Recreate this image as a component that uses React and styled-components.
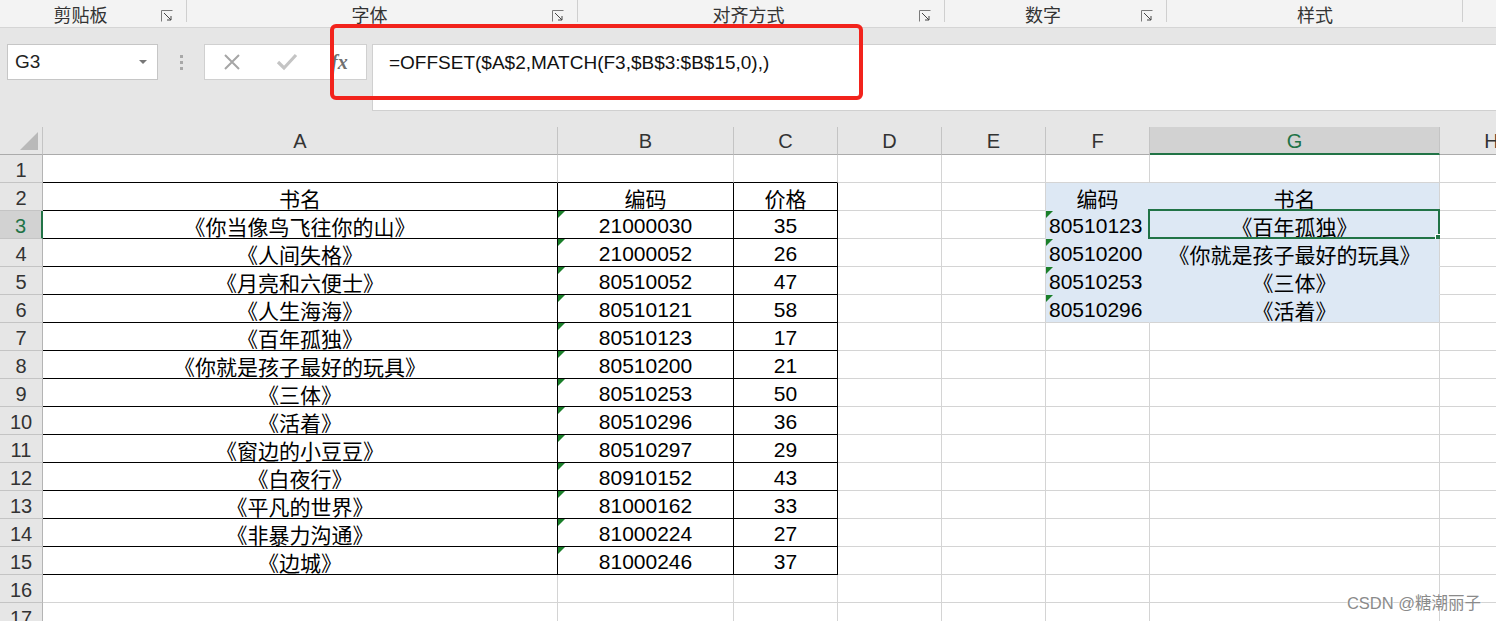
import React from "react";
import styled, { createGlobalStyle, css } from "styled-components";

const GREEN = "#217346";
const GRID = "#d4d4d4";
const BLUE = "#dde8f4";

const GlobalStyle = createGlobalStyle`
    html, body {
        margin: 0;
        padding: 0;
        background: #ffffff;
        overflow: hidden;
    }
    body {
        font-family: "Liberation Sans", "Noto Sans CJK SC", sans-serif;
        color: #000;
    }
`;

const Page = styled.div`
    position: relative;
    width: 1496px;
    height: 621px;
    overflow: hidden;
    background: #fff;
`;

/* ---------- ribbon group labels ---------- */

const Ribbon = styled.div`
    display: flex;
    height: 28px;
    background: #f3f3f3;
    border-bottom: 1px solid #d5d5d5;
    box-sizing: border-box;
`;

const Group = styled.div`
    display: flex;
    align-items: center;
    width: ${props => props.w}px;
    height: 100%;
    position: relative;
    flex-shrink: 0;
    &::after {
        content: "";
        display: ${props => props.noSep ? 'none' : 'block'};
        position: absolute;
        right: 0;
        top: 0;
        height: 22px;
        border-right: 1px solid #cfcfcf;
    }
`;

const GroupLabel = styled.div`
    flex: 1;
    text-align: center;
    font-size: 18px;
    color: #333;
    padding-top: 1px;
`;

const Launcher = styled.div`
    width: 26px;
    display: flex;
    align-items: center;
    justify-content: flex-start;
    padding-top: 4px;
`;

const LauncherIcon = () => (
    <svg width="12" height="12" viewBox="0 0 12 12">
        <path d="M0.5 11.5V0.5H11.5" fill="none" stroke="#7a7a7a" strokeWidth="1" />
        <path d="M3 3L10 10M10 6V10H6" fill="none" stroke="#444" strokeWidth="1" />
    </svg>
);

/* ---------- formula bar ---------- */

const FormulaArea = styled.div`
    background: #e6e6e6;
    height: 99px;
    padding: 16px 0 0 7px;
    box-sizing: border-box;
    display: flex;
    align-items: flex-start;
`;

const NameBox = styled.div`
    width: 151px;
    height: 36px;
    box-sizing: border-box;
    background: #fff;
    border: 1px solid #c6c6c6;
    display: flex;
    align-items: center;
    justify-content: space-between;
    padding: 0 10px 0 7px;
    font-size: 19px;
    color: #222;
`;

const DropArrow = styled.span`
    width: 0;
    height: 0;
    border-left: 4px solid transparent;
    border-right: 4px solid transparent;
    border-top: 4px solid #777;
`;

const Dots = styled.div`
    width: 46px;
    height: 36px;
    display: flex;
    flex-direction: column;
    align-items: center;
    justify-content: center;
    gap: 3px;
    span {
        width: 3px;
        height: 3px;
        background: #a8a8a8;
    }
`;

const EditBox = styled.div`
    width: 163px;
    height: 36px;
    box-sizing: border-box;
    background: #fff;
    border: 1px solid #d0d0d0;
    display: flex;
    align-items: center;
    padding-left: 18px;
    gap: 35px;
`;

const Fx = styled.span`
    font-family: "Liberation Serif", serif;
    font-style: italic;
    font-weight: bold;
    font-size: 20px;
    color: #707070;
    margin-left: -2px;
`;

const FormulaInput = styled.div`
    flex: 1;
    margin-left: 5px;
    height: 67px;
    background: #fff;
    border-left: 1px solid #d0d0d0;
    border-top: 1px solid #d0d0d0;
    border-bottom: 1px solid #d0d0d0;
    box-sizing: border-box;
    padding: 6px 0 0 16px;
    font-size: 19px;
    color: #111;
    line-height: 24px;
`;

/* ---------- sheet ---------- */

const COLS = [43, 515, 176, 104, 104, 104, 104, 290, 104];

const Sheet = styled.div`
    display: grid;
    grid-template-columns: ${COLS.map(c => c + 'px').join(' ')};
    grid-template-rows: 28px;
    grid-auto-rows: 28px;
    font-size: 21px;
`;

const ColHead = styled.div`
    background: ${props => props.active ? '#d2d2d2' : '#e6e6e6'};
    color: ${props => props.active ? GREEN : '#333'};
    border-right: 1px solid #c4c4c4;
    border-bottom: ${props => props.active ? `2px solid ${GREEN}` : '1px solid #ababab'};
    box-sizing: border-box;
    display: flex;
    align-items: center;
    justify-content: center;
    font-size: 20px;
    padding-top: 2px;
    overflow: hidden;
`;

const Corner = styled.div`
    background: #e6e6e6;
    border-right: 1px solid #c4c4c4;
    border-bottom: 1px solid #ababab;
    box-sizing: border-box;
    position: relative;
    &::after {
        content: "";
        position: absolute;
        right: 4px;
        bottom: 4px;
        width: 0;
        height: 0;
        border-left: 18px solid transparent;
        border-bottom: 18px solid #b9b9b9;
    }
`;

const RowHead = styled.div`
    background: ${props => props.active ? '#d2d2d2' : '#e6e6e6'};
    color: ${props => props.active ? GREEN : '#333'};
    border-right: ${props => props.active ? `2px solid ${GREEN}` : '1px solid #b4b4b4'};
    border-bottom: 1px solid #c4c4c4;
    box-sizing: border-box;
    display: flex;
    align-items: center;
    justify-content: center;
    font-size: 20px;
    padding-top: 3px;
`;

const Cell = styled.div`
    position: relative;
    box-sizing: border-box;
    border-right: 1px solid ${props => props.rc || GRID};
    border-bottom: 1px solid ${props => props.bc || GRID};
    background: ${props => props.fill || '#fff'};
    display: flex;
    align-items: center;
    justify-content: ${props => props.left ? 'flex-start' : 'center'};
    padding: 3px 0 0 ${props => props.left ? '3px' : '0'};
    white-space: nowrap;
    overflow: visible;
    ${props => props.flag && css`
        &::before {
            content: "";
            position: absolute;
            left: 0;
            top: 0;
            width: 0;
            height: 0;
            border-top: 7px solid #1a7f2a;
            border-right: 7px solid transparent;
        }
    `}
`;

const Selection = styled.div`
    position: absolute;
    left: -2px;
    top: -2px;
    right: -1px;
    bottom: -1px;
    border: 2px solid ${GREEN};
    pointer-events: none;
    &::after {
        content: "";
        position: absolute;
        right: -5px;
        bottom: -5px;
        width: 6px;
        height: 6px;
        background: ${GREEN};
        border: 1px solid #fff;
    }
`;

/* ---------- overlays ---------- */

const Annotation = styled.div`
    position: absolute;
    left: 330px;
    top: 24px;
    width: 533px;
    height: 76px;
    box-sizing: border-box;
    border: 4px solid #f2231c;
    border-radius: 6px;
    pointer-events: none;
`;

const Watermark = styled.div`
    position: absolute;
    right: 15px;
    bottom: 7px;
    font-family: "Liberation Sans", "Noto Sans CJK SC", sans-serif;
    font-size: 16.5px;
    color: #8a8a8a;
    text-shadow: 0 0 2px #fff, 0 0 2px #fff;
`;

const books = [
    ['《你当像鸟飞往你的山》', '21000030', '35'],
    ['《人间失格》', '21000052', '26'],
    ['《月亮和六便士》', '80510052', '47'],
    ['《人生海海》', '80510121', '58'],
    ['《百年孤独》', '80510123', '17'],
    ['《你就是孩子最好的玩具》', '80510200', '21'],
    ['《三体》', '80510253', '50'],
    ['《活着》', '80510296', '36'],
    ['《窗边的小豆豆》', '80510297', '29'],
    ['《白夜行》', '80910152', '43'],
    ['《平凡的世界》', '81000162', '33'],
    ['《非暴力沟通》', '81000224', '27'],
    ['《边城》', '81000246', '37'],
];

const lookup = [
    ['80510123', '《百年孤独》'],
    ['80510200', '《你就是孩子最好的玩具》'],
    ['80510253', '《三体》'],
    ['80510296', '《活着》'],
];

const groups = [
    { label: '剪贴板', w: 187, launcher: true },
    { label: '字体', w: 391, launcher: true },
    { label: '对齐方式', w: 367, launcher: true },
    { label: '数字', w: 222, launcher: true },
    { label: '样式', w: 296, launcher: false },
    { label: '', w: 40, launcher: false, noSep: true },
];

const letters = ['A', 'B', 'C', 'D', 'E', 'F', 'G', 'H'];

const buildRow = (r) => {
    // returns the 8 cell contents for sheet row r (1-based)
    let vals = ['', '', '', '', '', '', '', ''];
    if (r === 2) {
        vals = ['书名', '编码', '价格', '', '', '编码', '书名', ''];
    } else if (r >= 3 && r <= 15) {
        const b = books[r - 3];
        vals = [b[0], b[1], b[2], '', '', '', '', ''];
        if (r <= 6) {
            vals[5] = lookup[r - 3][0];
            vals[6] = lookup[r - 3][1];
        }
    }
    return vals;
};

export default function App() {
    const rows = [];
    for (let r = 1; r <= 17; r++) {
        const vals = buildRow(r);
        rows.push(<RowHead key={'h' + r} active={r === 3}>{r}</RowHead>);
        vals.forEach((v, c) => {
            const inTable = c <= 2 && r >= 2 && r <= 15;
            const inLookup = (c === 5 || c === 6) && r >= 2 && r <= 6;
            let bc = null;
            let rc = null;
            if (c <= 2 && r >= 1 && r <= 15) bc = '#000';
            if (inTable) rc = '#000';
            if (inLookup) {
                bc = r === 6 ? GRID : BLUE;
                rc = c === 6 ? GRID : BLUE;
            }
            const flag = (c === 1 && r >= 3 && r <= 15) || (c === 5 && r >= 3 && r <= 6);
            rows.push(
                <Cell
                    key={r + '-' + c}
                    bc={bc}
                    rc={rc}
                    fill={inLookup ? BLUE : null}
                    left={c === 5 && r >= 3}
                    flag={flag}
                >
                    {v}
                    {r === 3 && c === 6 && <Selection />}
                </Cell>
            );
        });
    }

    return (
        <Page>
            <GlobalStyle />
            <Ribbon>
                {groups.map((g, i) => (
                    <Group key={i} w={g.w} noSep={g.noSep}>
                        <GroupLabel>{g.label}</GroupLabel>
                        {g.launcher && <Launcher><LauncherIcon /></Launcher>}
                    </Group>
                ))}
            </Ribbon>
            <FormulaArea>
                <NameBox>
                    <span>G3</span>
                    <DropArrow />
                </NameBox>
                <Dots><span /><span /><span /></Dots>
                <EditBox>
                    <svg width="18" height="18" viewBox="0 0 18 18">
                        <path d="M2 2L16 16M16 2L2 16" stroke="#a6a6a6" strokeWidth="2" />
                    </svg>
                    <svg width="22" height="18" viewBox="0 0 22 18">
                        <path d="M2 9L8 15L20 2" fill="none" stroke="#c4c4c4" strokeWidth="3.2" />
                    </svg>
                    <Fx>fx</Fx>
                </EditBox>
                <FormulaInput>=OFFSET($A$2,MATCH(F3,$B$3:$B$15,0),)</FormulaInput>
            </FormulaArea>
            <Sheet>
                <Corner />
                {letters.map((l) => (
                    <ColHead key={l} active={l === 'G'}>{l}</ColHead>
                ))}
                {rows}
            </Sheet>
            <Annotation />
            <Watermark>CSDN @糖潮丽子</Watermark>
        </Page>
    );
}
